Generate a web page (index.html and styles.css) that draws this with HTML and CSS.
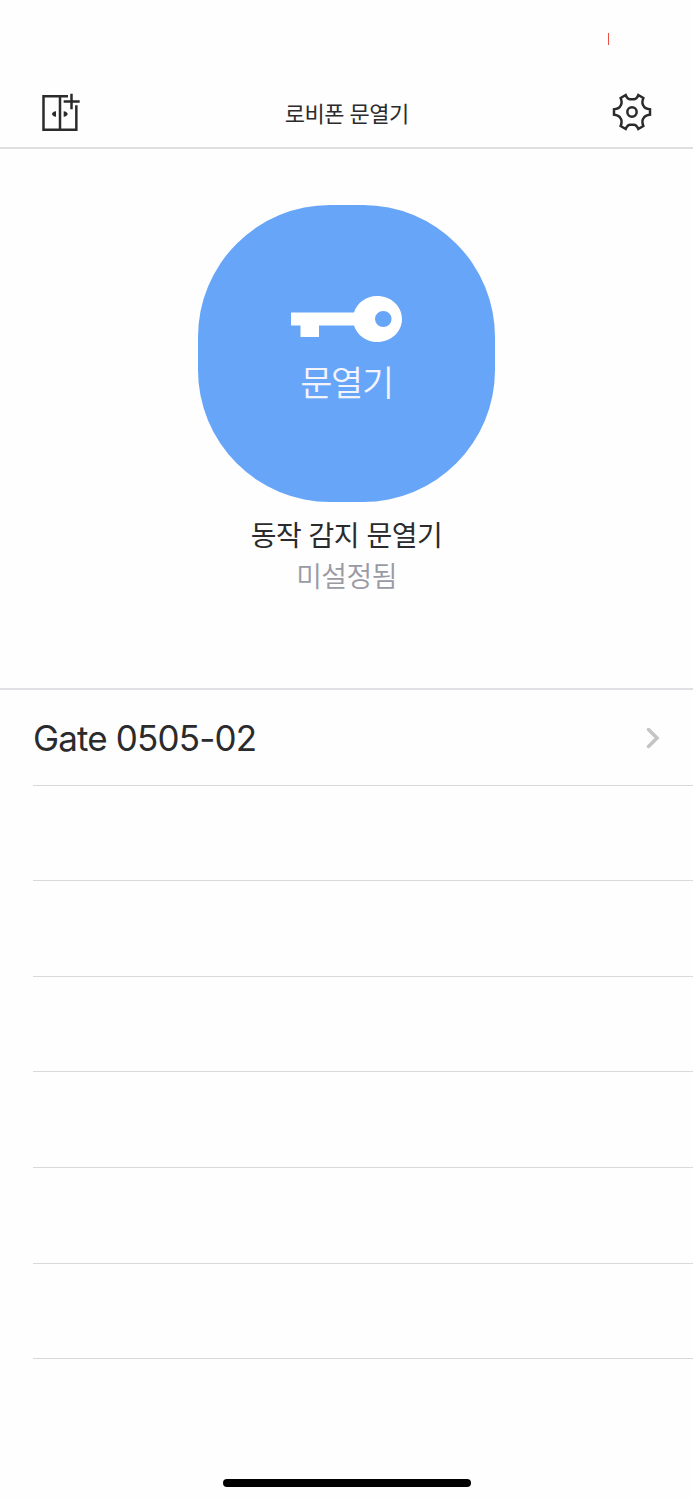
FILE: index.html
```html
<!DOCTYPE html>
<html lang="ko">
<head>
    <meta charset="UTF-8">
    <meta name="viewport" content="width=device-width, initial-scale=1.0">
    <title>로비폰 문열기</title>
    <link rel="stylesheet" href="styles.css">
</head>
<body>
    <div class="status-bar">
        <span class="status-mark"></span>
    </div>

    <header class="nav-bar">
        <button class="icon-button" type="button" aria-label="문 추가">
            <svg class="door-icon" viewBox="63 39 120 117">
                <path class="line" d="M144 49H70.500V149.500H169V76M120 49V149.500M154.500 41V88M131 64.500H179"/>
                <path d="M108 93.500V110.500Q97 109 96 102Q97 95 108 93.500ZM131 93.500V110.500Q142 109 143 102Q142 95 131 93.500Z"/>
            </svg>
        </button>
        <h1>로비폰 문열기</h1>
        <button class="icon-button" type="button" aria-label="설정">
            <svg class="gear-icon" viewBox="-60 -57 120 114">
                <path class="line" d="M-34 -42L-19 -51Q-14 -38 -5 -38H5Q14 -38 19 -51L34 -42Q28 -26 35 -18Q38 -10 54 -8V8Q38 10 35 18Q28 26 34 42L19 51Q14 38 5 38H-5Q-14 38 -19 51L-34 42Q-28 26 -35 18Q-38 10 -54 8V-8Q-38 -10 -35 -18Q-28 -26 -34 -42Z"/>
                <circle class="line" r="14"/>
            </svg>
        </button>
    </header>

    <main>
        <section class="open-section">
            <button class="open-button" type="button">
                <svg class="key-icon" viewBox="0 0 111 47">
                    <path fill-rule="evenodd" d="M0 16.500H63C66 7 75 0 86 0C100 0 111 10 111 23S100 46 86 46C75 46 66 39 63 29.500H28V41H9.500V29.500H0ZM92.300 15A8.300 8 0 1 0 92.300 31A8.300 8 0 1 0 92.300 15Z"/>
                </svg>
                <span class="open-label">문열기</span>
            </button>
            <h2>동작 감지 문열기</h2>
            <p class="state">미설정됨</p>
        </section>

        <ul class="gate-list">
            <li>
                <span>Gate 0505-02</span>
                <svg class="chevron" viewBox="0 0 14 22">
                    <path d="M2.500 2.500L11 11L2.500 19.500"/>
                </svg>
            </li>
            <li></li>
            <li></li>
            <li></li>
            <li></li>
            <li></li>
            <li></li>
        </ul>
    </main>

    <footer>
        <div class="home-indicator"></div>
    </footer>
</body>
</html>
```
FILE: styles.css
```css
* {
    margin: 0;
    padding: 0;
    box-sizing: border-box;
}

body {
    height: 1500px;
    display: flex;
    flex-direction: column;
    overflow: hidden;
    background-color: #fefefe;
    color: #2b2b2d;
    font-family: Inter, "Noto Sans CJK KR", sans-serif;
}

button {
    border: none;
    background: none;
    font-family: inherit;
}

svg {
    display: block;
}

/* Status bar */
.status-bar {
    height: 77px;
    display: flex;
    justify-content: flex-end;
    padding: 33px 84px 0 0;
}

.status-mark {
    width: 1.5px;
    height: 12px;
    background-color: #ef4c43;
}

/* Header */
.nav-bar {
    height: 72px;
    display: flex;
    justify-content: space-between;
    align-items: center;
    padding: 0 40.5px 0 41px;
    border-bottom: 2px solid #dfdfe0;
}

.nav-bar h1 {
    padding-bottom: 1px;
    font-family: "Noto Sans CJK KR", sans-serif;
    font-size: 22px;
    font-weight: 400;
    letter-spacing: -0.5px;
}

.door-icon {
    width: 40px;
    height: 39px;
    fill: #2b2b2d;
}

.gear-icon {
    width: 40px;
    height: 38px;
}

.line {
    fill: none;
    stroke: #2b2b2d;
    stroke-width: 7.5;
}

/* Open button */
.open-section {
    height: 541px;
    display: flex;
    flex-direction: column;
    align-items: center;
    padding-top: 56px;
    border-bottom: 2px solid #dfdfe4;
}

.open-button {
    width: 297px;
    height: 297px;
    display: flex;
    flex-direction: column;
    align-items: center;
    padding-top: 91px;
    border-radius: 132px;
    background-color: #67a5f8;
}

.key-icon {
    width: 111px;
    height: 47px;
    fill: #fff;
}

.open-label {
    margin-top: 14px;
    color: #f2f3fb;
    font-size: 35px;
    font-weight: 350;
    line-height: 52px;
    letter-spacing: -1.4px;
}

.open-section h2 {
    margin-top: 14px;
    font-size: 28px;
    font-weight: 400;
    line-height: 41px;
    letter-spacing: -0.5px;
}

.state {
    color: #9a9aa5;
    font-size: 28px;
    font-weight: 350;
    line-height: 41px;
    letter-spacing: -0.6px;
}

/* Gate list */
.gate-list {
    margin-left: 33px;
    list-style: none;
}

.gate-list li {
    height: 95.6px;
    display: flex;
    justify-content: space-between;
    align-items: center;
    padding: 2px 33px 0 0;
    border-bottom: 1px solid #d9d9dc;
    font-size: 35px;
    letter-spacing: -0.85px;
}

.chevron {
    width: 14px;
    height: 22px;
    fill: none;
    stroke: #c4c4c6;
    stroke-width: 3.5;
    stroke-linecap: round;
}

/* Home indicator */
footer {
    margin-top: auto;
    padding-bottom: 13px;
}

.home-indicator {
    width: 248px;
    height: 8px;
    margin: 0 auto;
    border-radius: 4px;
    background-color: #000;
}
```
